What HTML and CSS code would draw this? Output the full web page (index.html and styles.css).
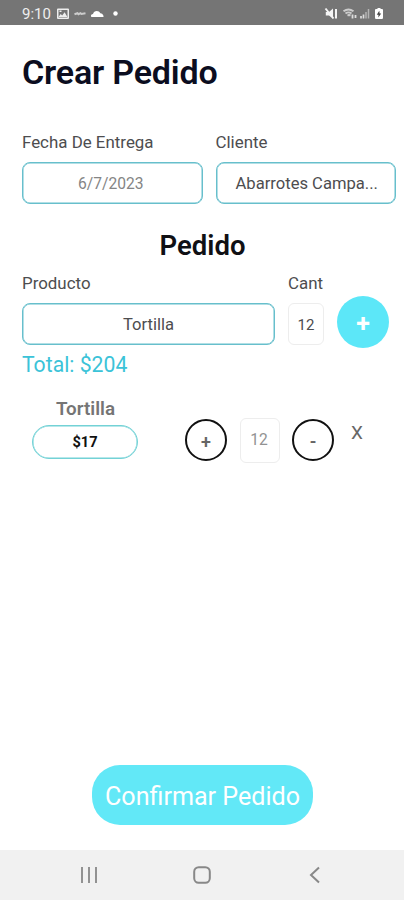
FILE: index.html
```html
<!DOCTYPE html>
<html lang="es">
<head>
<meta charset="utf-8">
<title>Crear Pedido</title>
<link rel="stylesheet" href="styles.css">
</head>
<body>
<div class="phone">
  <header class="status">
    <span class="time">9:10</span>
    <svg class="notif" width="66" height="14" viewBox="0 0 66 14">
      <path fill="#eee" fill-rule="evenodd" d="M2 1.500h10a1 1 0 0 1 1 1v8.500a1 1 0 0 1-1 1H2a1 1 0 0 1-1-1v-8.500a1 1 0 0 1 1-1zM2.500 3v7.500h9V3z"/>
      <path fill="#eee" d="M2.500 10l2.200-3 1.500 1.600 2.400-3.300 2.800 4.700zM3.500 3.500h2v1.600h-2z"/>
      <path d="M18.500 7.200l3-1 1 1 2-1 1 .8 4-.7" fill="none" stroke="#ccc" stroke-width="2"/>
      <path fill="#fff" d="M36 10C34.500 10 34.500 7.300 37 7c.8-3.900 6-3.900 7.300-.8C46.800 6 48.500 10 47 10z"/>
      <circle cx="59.500" cy="6.500" r="2.200" fill="#fff"/>
    </svg>
    <svg class="system" width="62" height="14" viewBox="0 0 62 14">
      <path fill="#f4f4f4" d="M1.800 5H5l4-3.500v10L5 8.500H1.800z"/>
      <path d="M1.500 1.500l8 10M12 2v9.500" stroke="#f4f4f4" stroke-width="2" fill="none"/>
      <path d="M19.500 4.200c3.500-2.500 6.500-2.500 10 0M21.500 6.500c2-1.500 4-1.500 6 0M23.500 8.700l1.500-.8 1.500.8" stroke="#ccc" stroke-width="1.900" fill="none"/>
      <path d="M28.500 7.500v4M31.500 8v3" stroke="#ddd" stroke-width="1.800"/>
      <path d="M37 9v2.500M39.500 7.500v4" stroke="#ddd" stroke-width="1.700"/>
      <path d="M42 5v6.500M44.500 2v9.500" stroke="#b4b4b4" stroke-width="1.500"/>
      <path fill="#fff" d="M53.500 1h3v1H58q1 0 1 1v7.500q0 1.500-1 1.500h-6q-1 0-1-1.500V3q0-1 1-1h1.500z"/>
      <path fill="#444" d="M55.300 3.700L52.800 7.800h1.700L54.300 10.400 57.200 6.400h-1.600z"/>
    </svg>
  </header>
  <main class="screen">
    <h1 class="title">Crear Pedido</h1>
    <div class="row details">
      <label class="group"><span class="label">Fecha De Entrega</span><span class="field date">6/7/2023</span></label>
      <label class="group"><span class="label">Cliente</span><span class="field client">Abarrotes Campa...</span></label>
    </div>
    <h2 class="subtitle">Pedido</h2>
    <div class="row order">
      <label class="group product"><span class="label">Producto</span><span class="field">Tortilla</span></label>
      <label class="group cant"><span class="label">Cant</span><span class="qty">12</span></label>
      <button class="add">+</button>
    </div>
    <p class="total">Total: $204</p>
    <div class="item">
      <div class="info"><span class="name">Tortilla</span><span class="price">$17</span></div>
      <button class="step">+</button>
      <span class="qty item-qty">12</span>
      <button class="step minus">-</button>
      <button class="remove">X</button>
    </div>
    <button class="confirm">Confirmar Pedido</button>
  </main>
  <nav class="nav">
    <svg width="18" height="18" viewBox="0 0 18 18"><path d="M2 1v16M9 1v16M16 1v16" stroke="#929292" stroke-width="2"/></svg>
    <svg width="18" height="18" viewBox="0 0 18 18"><rect x="1.200" y="1.200" width="15.600" height="15.600" rx="4.500" fill="none" stroke="#888" stroke-width="2"/></svg>
    <svg width="18" height="18" viewBox="0 0 18 18"><path d="M13 1.500L5 9l8 7.500" fill="none" stroke="#888" stroke-width="2"/></svg>
  </nav>
</div>
</body>
</html>
```
FILE: styles.css
```css
* { box-sizing: border-box; }
body { margin: 0; background: #fff; font-family: Roboto, sans-serif; color: #4d4d4f; }
button { font-family: inherit; padding: 0; border: 0; background: none; }
.phone { width: 404px; height: 900px; display: flex; flex-direction: column; overflow: hidden; }
.status { height: 25px; background: #757575; display: flex; align-items: center; padding: 2px 18px 0 22px; color: #eee; flex: none; }
.time { font-size: 15px; width: 34px; line-height: 20px; white-space: nowrap; }
.system { margin-left: auto; }
.screen { flex: 1; display: flex; flex-direction: column; padding: 0 8px 0 22px; }
.title { margin: 27px 0 0; font-size: 34px; line-height: 40px; font-weight: 600; letter-spacing: -0.18px; color: #0b0d20; }
.row { display: flex; }
.details { margin-top: 40px; gap: 13px; }
.group { display: flex; flex-direction: column; flex: 1; }
.label { font-size: 16.9px; line-height: 20px; margin-bottom: 10px; white-space: nowrap; }
.field { height: 42px; border: 1px solid #67bfcc; box-shadow: inset 0 0 0 0.5px #67bfcc; border-radius: 8px; display: flex; align-items: center; justify-content: center; font-size: 16.6px; padding-top: 1px; white-space: nowrap; }
.date { color: #858585; font-size: 15.6px; padding-right: 3px; }
.client { padding-left: 2px; }
.subtitle { margin: 25px 0 0; width: 361px; text-align: center; font-size: 27.5px; line-height: 34px; font-weight: 600; color: #101014; }
.order { margin-top: 10px; }
.product { flex: 0 0 253px; margin-right: 13px; }
.cant { flex: 0 0 36px; margin-right: 13px; }
.qty { height: 42px; border: 1px solid #ededed; border-radius: 6px; display: flex; align-items: center; justify-content: center; font-size: 15px; padding-top: 1px; }
.add { width: 52px; height: 52px; border-radius: 50%; background: #5ce7f8; color: #fff; font-size: 25px; font-weight: 700; margin-top: 23px; padding-top: 3px; }
.total { margin: 4px 0 0; font-size: 21.2px; line-height: 26px; color: #3bc3d8; }
.item { display: flex; align-items: flex-start; margin: 19px 0 0 10px; height: 70px; }
.info { width: 106px; display: flex; flex-direction: column; margin-right: 47px; text-align: center; }
.name { font-size: 18.8px; font-weight: 600; line-height: 24px; color: #757575; padding-left: 1px; }
.price { height: 34px; margin-top: 4px; border: 1px solid #73d2d6; box-shadow: inset 0 0 0 0.5px #73d2d6; border-radius: 17px; display: flex; align-items: center; justify-content: center; font-size: 14.6px; font-weight: 700; color: #111; }
.step { width: 42px; height: 42px; border: 2px solid #111; border-radius: 50%; margin-top: 22px; color: #666; font-size: 18px; font-weight: 600; padding-top: 3px; }
.item-qty { width: 40px; height: 45px; margin: 21px 12px 0 13px; font-size: 15.6px; color: #929292; padding: 0 2px 1px 0; }
.remove { margin: 25px 0 0 17px; font-size: 19px; line-height: 22px; color: #666; }
.confirm { width: 221px; height: 60px; margin: auto 0 25px 70px; background: #62e8f7; border-radius: 28px; color: #fff; font-size: 25.1px; padding-top: 2px; white-space: nowrap; }
.nav { height: 50px; flex: none; background: #f1f1f1; display: flex; justify-content: space-between; padding: 16px 80px; }
```
